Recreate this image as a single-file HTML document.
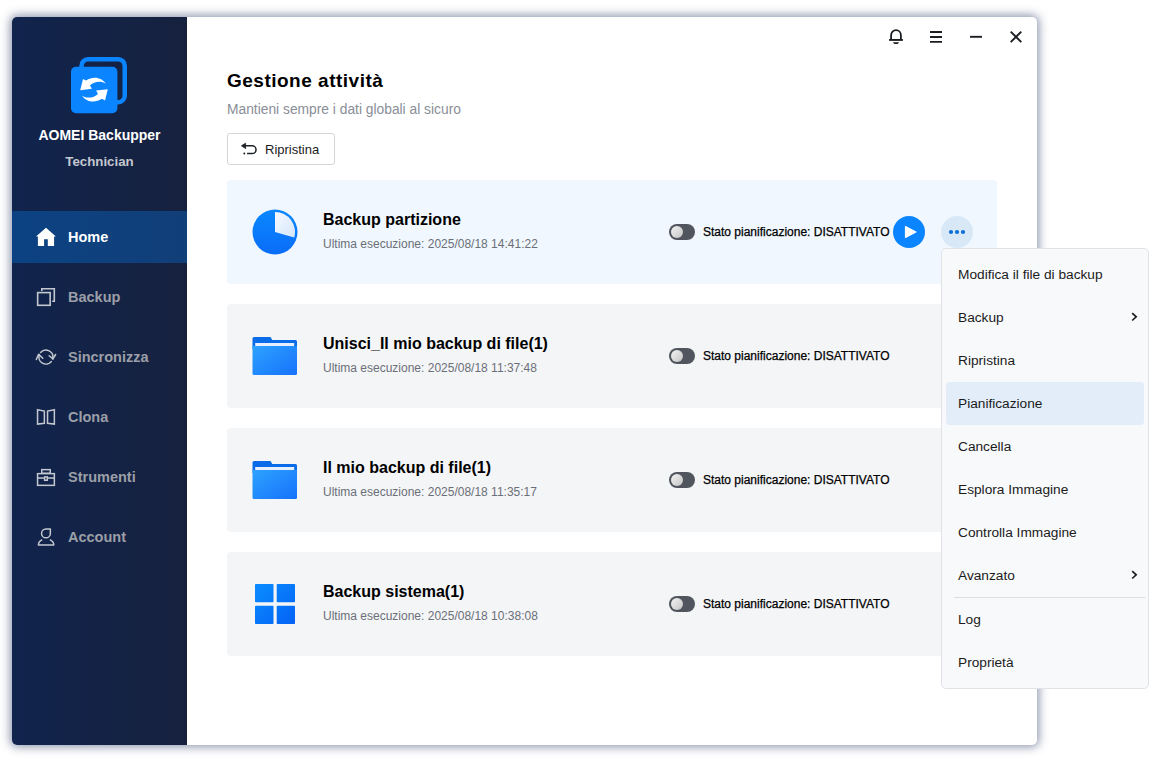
<!DOCTYPE html>
<html>
<head>
<meta charset="utf-8">
<style>
*{margin:0;padding:0;box-sizing:border-box;}
html,body{width:1161px;height:771px;overflow:hidden;background:#fff;font-family:"Liberation Sans",sans-serif;}
.a{position:absolute;white-space:nowrap;}
.win{position:absolute;left:12px;top:17px;width:1025px;height:728px;border-radius:5px;background:#fff;box-shadow:0 0 10px 2px rgba(50,65,110,0.55);}
.side{position:absolute;left:12px;top:17px;width:175px;height:728px;background:linear-gradient(to right,#11244d,#16213e);border-radius:5px 0 0 5px;}
.brand{left:12px;width:175px;text-align:center;color:#fff;font-weight:700;}
.navbg{position:absolute;left:12px;top:211px;width:175px;height:52px;background:linear-gradient(to right,#0c4283,#113f78);}
.lbl{position:absolute;left:68px;font-size:14.5px;font-weight:700;color:#9b9fa7;line-height:18px;white-space:nowrap;}
.card{position:absolute;left:227px;width:770px;height:104px;border-radius:4px;background:#f4f5f7;}
.card.sel{background:#f0f7fe;}
.ct{position:absolute;left:96px;top:31px;font-size:16px;font-weight:700;color:#000;white-space:nowrap;line-height:18px;}
.cs{position:absolute;left:96px;top:57px;font-size:12px;color:#6b6f78;white-space:nowrap;line-height:14px;}
.tog{position:absolute;left:442px;top:44px;width:26px;height:16px;border-radius:8px;background:#50555e;}
.tog:after{content:"";position:absolute;left:2px;top:2px;width:12px;height:12px;border-radius:6px;background:linear-gradient(135deg,#f4f4f4,#c4c4c4);}
.st{position:absolute;left:476px;top:44px;line-height:16px;font-size:12px;color:#000;white-space:nowrap;-webkit-text-stroke:0.25px #000;}
.ico{position:absolute;left:25px;}
.menu{position:absolute;left:941px;top:248px;width:208px;height:441px;background:#f8f9fa;border:1px solid #e0e2e6;border-radius:5px;}
.mi{position:absolute;left:16px;font-size:13.7px;color:#1b1b1b;white-space:nowrap;line-height:20px;}
.hl{position:absolute;left:4px;top:133px;width:198px;height:43px;background:#e3edf9;border-radius:4px;}
</style>
</head>
<body>
<div class="win"></div>
<div class="side"></div>

<!-- logo -->
<svg class="a" style="left:66px;top:52px" width="66" height="66" viewBox="0 0 66 66">
  <rect x="15.55" y="7.25" width="43.2" height="42.9" rx="6.5" fill="none" stroke="#0a84ff" stroke-width="4.5"/>
  <rect x="5" y="14.7" width="46.4" height="46.5" rx="5" fill="#0a84ff"/>
  <g transform="translate(10,20)" fill="#fff">
    <path d="M29.9,11.7 C26,6 18,3.5 10,8.6 L7,7 L4.2,18.2 L15.9,16.8 L14,13.5 C18,9.5 25,8.5 29.9,11.7 Z"/>
    <path d="M6.1,23.7 C10,29.4 18,31.9 26,26.8 L29,28.4 L31.8,17.2 L20.1,18.6 L22,21.9 C18,25.9 11,26.9 6.1,23.7 Z"/>
  </g>
</svg>
<div class="a brand" style="top:126px;font-size:14px;line-height:18px;">AOMEI Backupper</div>
<div class="a brand" style="top:153px;font-size:13.3px;line-height:18px;color:#c3c7cf;">Technician</div>

<div class="navbg"></div>
<!-- nav icons -->
<svg class="a" style="left:30px;top:220px" width="32" height="32" viewBox="0 0 32 32">
  <path d="M16,7.7 L25.9,16.6 L24.1,16.6 L24.1,26.1 L17.8,26.1 L17.8,19.3 L14.1,19.3 L14.1,26.1 L7.9,26.1 L7.9,16.6 L6,16.6 Z" fill="#fff"/>
</svg>
<div class="lbl" style="top:228px;color:#fff;">Home</div>

<svg class="a" style="left:30px;top:280px" width="32" height="32" viewBox="0 0 32 32" fill="none" stroke="#c3c7cf" stroke-width="1.6">
  <rect x="7.65" y="12.6" width="12.5" height="12.7"/>
  <path d="M11.8,11 V8.7 H24.3 V21.2 H22.2"/>
</svg>
<div class="lbl" style="top:288px;">Backup</div>

<svg class="a" style="left:30px;top:340px" width="32" height="32" viewBox="0 0 32 32" fill="none" stroke="#c3c7cf" stroke-width="1.5" stroke-linecap="round" stroke-linejoin="round">
  <path d="M10.58,12.55 A7,7 0 0 1 22.65,18.95"/>
  <path d="M19.2,15.7 L23,18.9 L25.6,14.5"/>
  <path d="M21.34,21.5 A7,7 0 0 1 9.35,14.63"/>
  <path d="M6.3,19.5 L8.6,14.4 L12.8,18.2"/>
</svg>
<div class="lbl" style="top:348px;">Sincronizza</div>

<svg class="a" style="left:30px;top:400px" width="32" height="32" viewBox="0 0 32 32" fill="none" stroke="#c3c7cf" stroke-width="1.5" stroke-linejoin="miter">
  <path d="M7.55,9.7 L14.35,11 L14.35,23.3 L7.55,24.1 Z"/>
  <path d="M24.35,9.7 L17.55,11 L17.55,23.3 L24.35,24.1 Z"/>
</svg>
<div class="lbl" style="top:408px;">Clona</div>

<svg class="a" style="left:30px;top:460px" width="32" height="32" viewBox="0 0 32 32" fill="none" stroke="#c3c7cf" stroke-width="1.5">
  <rect x="11.75" y="9.65" width="8.5" height="3.6"/>
  <rect x="7.55" y="13.65" width="16.8" height="11.7"/>
  <path d="M7.55,18 H13.9 M18,18 H24.35"/>
  <rect x="14.6" y="16.9" width="2.7" height="3.4"/>
</svg>
<div class="lbl" style="top:468px;">Strumenti</div>

<svg class="a" style="left:30px;top:520px" width="32" height="32" viewBox="0 0 32 32" fill="none" stroke="#c3c7cf" stroke-width="1.5" stroke-linejoin="round">
  <path d="M20.35,9 V13.4 A4.4,4.4 0 1 1 15.95,9 Z"/>
  <path d="M12.2,19.6 C9.8,20.8 8.4,22.8 8.4,25 H23.8 C23.8,22.8 22.3,20.8 19.8,19.6"/>
</svg>
<div class="lbl" style="top:528px;">Account</div>

<!-- title bar icons -->
<svg class="a" style="left:880px;top:22px" width="32" height="32" viewBox="0 0 32 32" fill="none" stroke="#1a1d21" stroke-width="1.8">
  <path d="M11.1,17.9 V13.2 A4.9,5 0 0 1 20.9,13.2 V17.9"/>
  <path d="M9.1,17.95 H22.9" stroke-width="1.9"/>
  <path d="M13.1,20.2 H18.9 A2.9,1.8 0 0 1 13.1,20.2 Z" fill="#1a1d21" stroke="none"/>
</svg>
<svg class="a" style="left:920px;top:22px" width="32" height="32" viewBox="0 0 32 32" fill="none" stroke="#1a1d21" stroke-width="1.85">
  <path d="M10,10 H22 M10,14.95 H22 M10,19.9 H22"/>
</svg>
<svg class="a" style="left:960px;top:22px" width="32" height="32" viewBox="0 0 32 32" fill="none" stroke="#1a1d21" stroke-width="1.9">
  <path d="M10,14.8 H22"/>
</svg>
<svg class="a" style="left:1000px;top:22px" width="32" height="32" viewBox="0 0 32 32" fill="none" stroke="#1a1d21" stroke-width="1.9">
  <path d="M10.7,9.6 L21.3,20.2 M21.3,9.6 L10.7,20.2"/>
</svg>

<!-- header -->
<div class="a" style="left:227px;top:71px;font-size:19px;font-weight:700;letter-spacing:0.5px;color:#000;line-height:20px;">Gestione attività</div>
<div class="a" style="left:227px;top:102px;font-size:13.8px;color:#8a8e97;line-height:16px;">Mantieni sempre i dati globali al sicuro</div>
<div class="a" style="left:227px;top:133px;width:108px;height:32px;border:1px solid #d6d6d6;border-radius:3px;"></div>
<svg class="a" style="left:236px;top:136px" width="26" height="26" viewBox="0 0 26 26" fill="none" stroke="#1f2226" stroke-width="1.5">
  <path d="M9,9.8 H16.2 A3.85,3.85 0 0 1 16.2,17.5 H11.1"/>
  <path d="M5.4,9.8 L9.6,7.2 L9.6,12.6 Z" fill="#1f2226" stroke-linejoin="round" stroke-width="0.8"/>
  <circle cx="8.3" cy="17.5" r="1" fill="#1f2226" stroke="none"/>
</svg>
<div class="a" style="left:265px;top:142px;font-size:13px;color:#1b1b1b;line-height:16px;">Ripristina</div>

<!-- cards -->
<div class="card sel" style="top:180px;">
  <svg class="a" style="left:25px;top:29px" width="46" height="46" viewBox="0 0 46 46">
    <defs><linearGradient id="pg" x1="0" y1="0" x2="0" y2="1"><stop offset="0" stop-color="#0a88ff"/><stop offset="1" stop-color="#0a6cf8"/></linearGradient>
    <linearGradient id="wg" x1="0" y1="0" x2="1" y2="1"><stop offset="0" stop-color="#f6f9ff"/><stop offset="1" stop-color="#d4e6fb"/></linearGradient></defs>
    <circle cx="23" cy="23" r="22.5" fill="url(#pg)"/>
    <path d="M23,23 V3 A20,20 0 0 1 42.2,28.6 Z" fill="url(#wg)"/>
  </svg>
  <div class="ct">Backup partizione</div>
  <div class="cs">Ultima esecuzione: 2025/08/18 14:41:22</div>
  <div class="tog"></div>
  <div class="st">Stato pianificazione: DISATTIVATO</div>
  <svg class="a" style="left:666px;top:36px" width="32" height="32" viewBox="0 0 32 32">
    <circle cx="16" cy="16" r="16" fill="#0a84ff"/>
    <path d="M12.4,10.3 L23.2,16 L12.4,21.7 Z" fill="#fff" stroke="#fff" stroke-width="1" stroke-linejoin="round"/>
  </svg>
  <svg class="a" style="left:714px;top:36px" width="32" height="32" viewBox="0 0 32 32">
    <circle cx="16" cy="16" r="16" fill="#d9e8f7"/>
    <circle cx="10" cy="16" r="2.1" fill="#0b6fd8"/>
    <circle cx="16" cy="16" r="2.1" fill="#0b6fd8"/>
    <circle cx="22" cy="16" r="2.1" fill="#0b6fd8"/>
  </svg>
</div>
<div class="card" style="top:304px;">
  <svg class="a" style="left:25px;top:33px" width="46" height="40" viewBox="0 0 46 40">
    <defs><linearGradient id="fb" x1="0" y1="0" x2="1" y2="1"><stop offset="0" stop-color="#2da2ff"/><stop offset="1" stop-color="#1672fb"/></linearGradient></defs>
    <path d="M0.5,1.5 Q0.5,0 2,0 H18.5 L20.3,3 H43.5 Q45,3 45,4.5 V12 H0.5 Z" fill="#0a6be8"/>
    <rect x="3.2" y="6" width="39" height="3.5" fill="#e6efff"/>
    <path d="M0.5,9 H45 V36.5 Q45,38 43.5,38 H2 Q0.5,38 0.5,36.5 Z" fill="url(#fb)"/>
  </svg>
  <div class="ct">Unisci_Il mio backup di file(1)</div>
  <div class="cs">Ultima esecuzione: 2025/08/18 11:37:48</div>
  <div class="tog"></div>
  <div class="st">Stato pianificazione: DISATTIVATO</div>
</div>
<div class="card" style="top:428px;">
  <svg class="a" style="left:25px;top:33px" width="46" height="40" viewBox="0 0 46 40">
    <path d="M0.5,1.5 Q0.5,0 2,0 H18.5 L20.3,3 H43.5 Q45,3 45,4.5 V12 H0.5 Z" fill="#0a6be8"/>
    <rect x="3.2" y="6" width="39" height="3.5" fill="#e6efff"/>
    <path d="M0.5,9 H45 V36.5 Q45,38 43.5,38 H2 Q0.5,38 0.5,36.5 Z" fill="url(#fb)"/>
  </svg>
  <div class="ct">Il mio backup di file(1)</div>
  <div class="cs">Ultima esecuzione: 2025/08/18 11:35:17</div>
  <div class="tog"></div>
  <div class="st">Stato pianificazione: DISATTIVATO</div>
</div>
<div class="card" style="top:552px;">
  <svg class="a" style="left:27px;top:31px" width="42" height="42" viewBox="0 0 42 42">
    <defs><linearGradient id="wb" gradientUnits="userSpaceOnUse" x1="0" y1="0" x2="42" y2="42"><stop offset="0" stop-color="#0a8eff"/><stop offset="1" stop-color="#0461f5"/></linearGradient></defs>
    <g fill="url(#wb)">
      <rect x="1" y="1" width="18.5" height="18.2" rx="0.8"/>
      <rect x="22.7" y="1" width="18.3" height="18.2" rx="0.8"/>
      <rect x="1" y="22.8" width="18.5" height="18.2" rx="0.8"/>
      <rect x="22.7" y="22.8" width="18.3" height="18.2" rx="0.8"/>
    </g>
  </svg>
  <div class="ct">Backup sistema(1)</div>
  <div class="cs">Ultima esecuzione: 2025/08/18 10:38:08</div>
  <div class="tog"></div>
  <div class="st">Stato pianificazione: DISATTIVATO</div>
</div>

<!-- context menu -->
<div class="menu">
  <div class="hl"></div>
  <div class="mi" style="top:16px;">Modifica il file di backup</div>
  <div class="mi" style="top:59px;">Backup</div>
  <div class="mi" style="top:102px;">Ripristina</div>
  <div class="mi" style="top:145px;">Pianificazione</div>
  <div class="mi" style="top:188px;">Cancella</div>
  <div class="mi" style="top:231px;">Esplora Immagine</div>
  <div class="mi" style="top:274px;">Controlla Immagine</div>
  <div class="mi" style="top:317px;">Avanzato</div>
  <div class="a" style="left:12px;top:348px;width:191px;height:1px;background:#dcdee3;"></div>
  <div class="mi" style="top:361px;">Log</div>
  <div class="mi" style="top:404px;">Proprietà</div>
  <svg class="a" style="left:182px;top:58px" width="20" height="20" viewBox="0 0 20 20" fill="none" stroke="#1b1d20" stroke-width="1.7">
    <path d="M8.2,6.1 L12.2,9.8 L8.2,13.5"/>
  </svg>
  <svg class="a" style="left:182px;top:316px" width="20" height="20" viewBox="0 0 20 20" fill="none" stroke="#1b1d20" stroke-width="1.7">
    <path d="M8.2,6.1 L12.2,9.8 L8.2,13.5"/>
  </svg>
</div>
</body>
</html>
